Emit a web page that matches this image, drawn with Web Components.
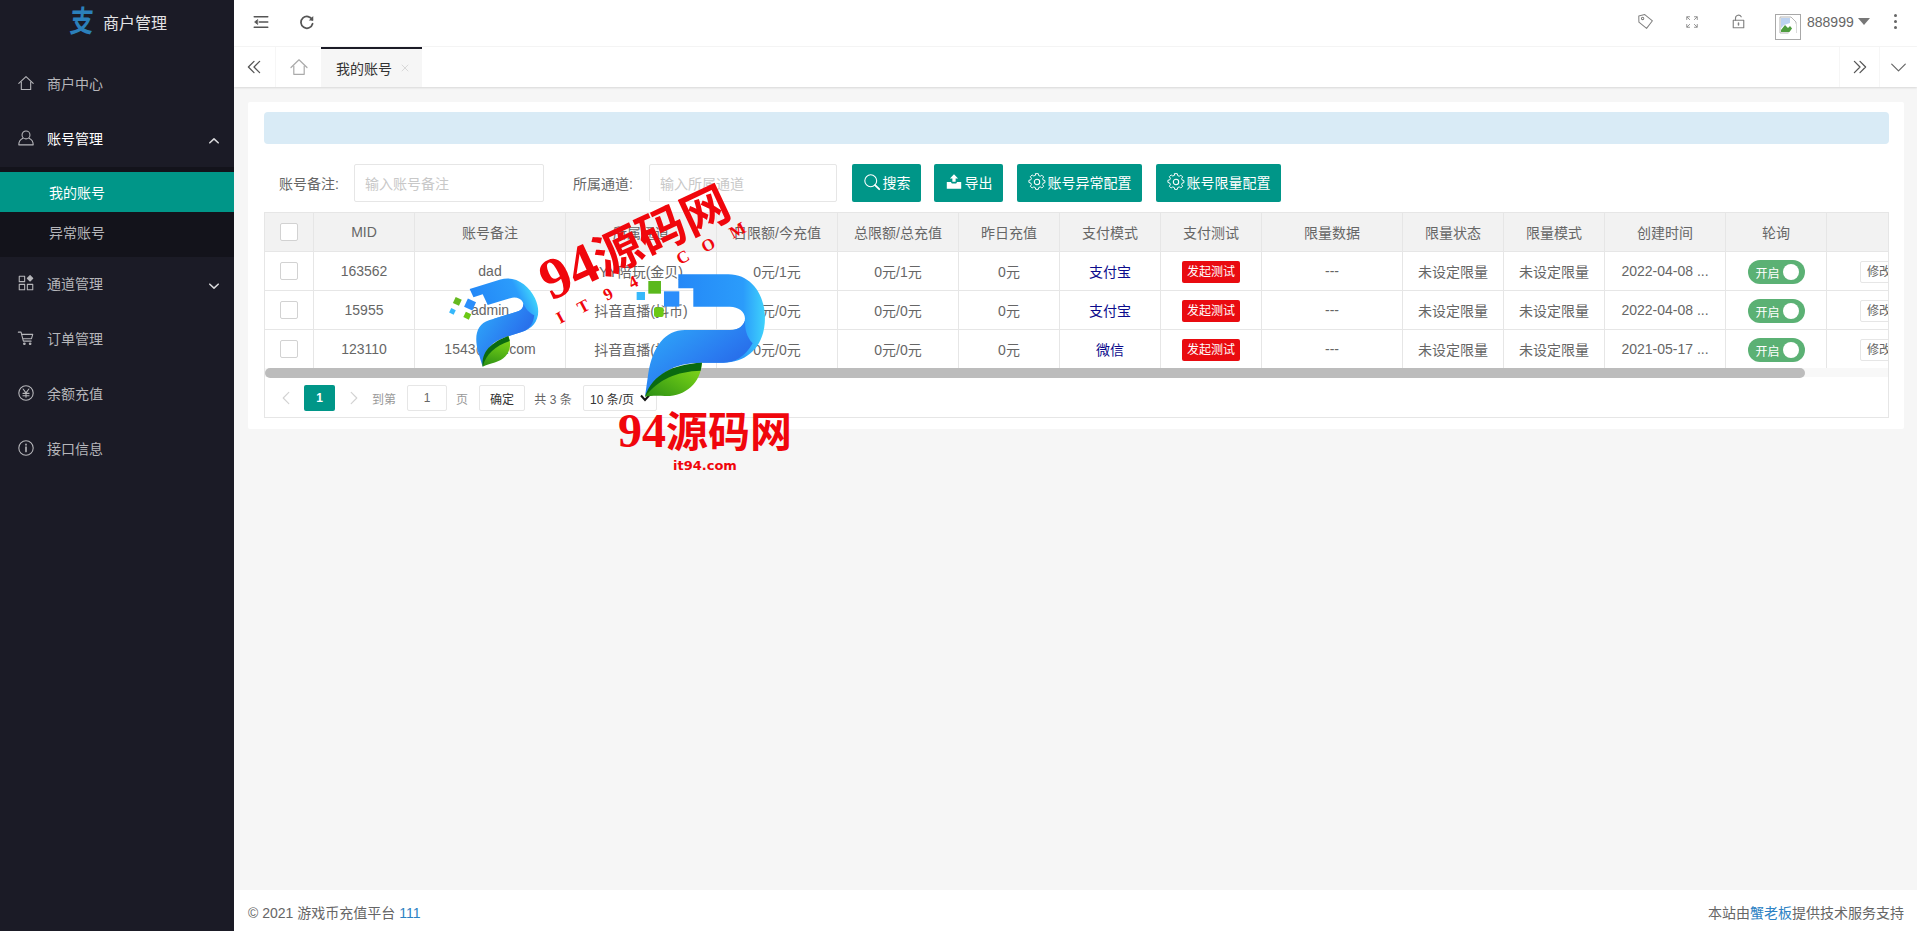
<!DOCTYPE html>
<html lang="zh">
<head>
<meta charset="utf-8">
<title>我的账号</title>
<style>
html,body{margin:0;padding:0;height:100%;overflow:hidden;background:#f6f6f6;}
body{font:14px "Liberation Sans","Noto Sans CJK SC",sans-serif;color:#666;}
</style>
</head>
<body>
<admin-app></admin-app>
<script>
const ic = (body, size = 16, vb = 20, extra = '') =>
  `<svg width="${size}" height="${size}" viewBox="0 0 ${vb} ${vb}" fill="none" stroke="currentColor" stroke-width="1.2" stroke-linecap="round" stroke-linejoin="round" style="flex:none" ${extra}>${body}</svg>`;
const ICONS = {
  home: '<path d="M2 10.5 10 2.8l8 7.7"/><path d="M4.8 9v8.3h10.4V9"/>',
  user: '<circle cx="10" cy="6.6" r="4.4"/><path d="M6.6 10.2C3.8 11.4 2 14 2 17.6h16c0-3.6-1.8-6.2-4.6-7.4"/>',
  apps: '<rect x="2.5" y="2.5" width="6" height="6"/><rect x="2.5" y="11.5" width="6" height="6"/><rect x="11.5" y="11.5" width="6" height="6"/><path d="M14.5 1.8l3 3-3 3-3-3z" fill="currentColor"/>',
  cart: '<path d="M1.5 3.5h3l2.6 10h8.6"/><path d="M5.2 6h12.3l-1.4 4.8H7"/><circle cx="8.2" cy="16.4" r=".9" fill="currentColor"/><circle cx="14.6" cy="16.4" r=".9" fill="currentColor"/>',
  yen: '<circle cx="10" cy="10" r="8"/><path d="M6.8 5.6 10 9.8l3.2-4.2M6.6 10.4h6.8M6.6 13h6.8M10 9.8v5"/>',
  info: '<circle cx="10" cy="10" r="8"/><path d="M10 9v5M10 5.8v.8" stroke-width="1.8"/>',
  up: '<path d="M3 13 10 6.5 17 13" stroke-width="2.6"/>',
  down: '<path d="M3 7l7 6.5L17 7" stroke-width="2.6"/>',
  indent: '<path d="M1.5 3.5h17M8 10h10.5M1.5 16.5h17" stroke-width="1.8"/><path d="M5.5 7.2 2 10l3.5 2.8z" fill="currentColor" stroke-width="1"/>',
  refresh: '<path d="M16.6 7.4A7.4 7.4 0 1 0 17 12.2" stroke-width="2.2"/><path d="M17.8 2.4v5.6h-5.6z" fill="currentColor" stroke="none"/>',
  tag: '<path d="M2.8 2.8 10 1.8l8.2 8.2-7.8 8.2-8.2-8.2z" transform="rotate(-6 10 10)"/><circle cx="6.6" cy="6.4" r="1.4"/>',
  full: '<path d="M2.5 6.5v-4h4M13.5 2.5h4v4M17.5 13.5v4h-4M6.5 17.5h-4v-4M3 3l3.6 3.6M17 3l-3.6 3.6M17 17l-3.6-3.6M3 17l3.6-3.6"/>',
  lock: '<rect x="3" y="8.4" width="14" height="10" stroke-width="1.5"/><path d="M6 8.4V5.4a4 4 0 0 1 7.6-1.6" stroke-width="1.5"/><path d="M10 12v2.6" stroke-width="2"/>',
  dbleft: '<path d="M10 3 3 10l7 7M17 3l-7 7 7 7" stroke-width="1.6"/>',
  dbright: '<path d="M3 3l7 7-7 7M10 3l7 7-7 7" stroke-width="1.6"/>',
  chev: '<path d="M2 6l8 8 8-8" stroke-width="1.4"/>',
  search: '<circle cx="8.6" cy="8.6" r="6.6"/><path d="M13.4 13.4 18 18" stroke-width="2"/>',
  gear: '<path d="M8.4 1.8h3.2l.5 2.4 1.9.8 2-1.3 2.2 2.2-1.3 2 .8 1.9 2.1.5v2.6l-2.1.5-.8 1.9 1.3 2-2.2 2.2-2-1.3-1.9.8-.5 2.2H8.4l-.5-2.2-1.9-.8-2 1.3-2.2-2.2 1.3-2-.8-1.9L0 12.6V10l2.3-.5.8-1.9-1.3-2L4 3.4l2 1.3 1.9-.8z" transform="translate(1 -.9) scale(.9)"/><circle cx="10" cy="10" r="3"/>',
  exp: '<path d="M10 1.5 14.5 6h-2.7v3.6H8.2V6H5.5z" fill="currentColor" stroke="none"/><path d="M2 10h4.6l1 1.8h4.8l1-1.8H18v7.5H2z" fill="currentColor" stroke="none"/>'
};

const define = (name, css, html, setup) => {
  customElements.define(name, class extends HTMLElement {
    constructor() {
      super();
      const root = this.attachShadow({mode: 'open'});
      root.innerHTML = `<style>${css}</style>${typeof html === 'function' ? html(this) : html}`;
      if (setup) setup(root, this);
    }
  });
};

define('nav-item', `
  :host{display:flex;align-items:center;height:55px;color:#b6b6ba;padding:0 0 3px 19px;box-sizing:border-box;position:relative;font-size:14px;flex:none;}
  :host([open]){color:#fff;}
  .i{width:14px;height:18px;display:flex;align-items:center;justify-content:center;margin-right:14px;color:#b6b6ba;}
  .i svg{display:block;}
  .c{position:absolute;left:208px;top:50%;margin-top:-6px;width:12px;height:12px;color:#d8d8da;}
`, h => `<span class="i">${ic(ICONS[h.getAttribute('icon')], 18)}</span><slot></slot>${h.hasAttribute('caret') ? `<span class="c">${ic(ICONS[h.getAttribute('caret')], 12)}</span>` : ''}`);

define('nav-sub', `
  :host{display:flex;align-items:center;height:40px;padding-left:49px;color:#b6b6ba;font-size:14px;padding-bottom:1px;box-sizing:border-box;}
  :host([active]){background:#009688;color:#fff;}
`, '<slot></slot>');

define('side-nav', `
  :host{display:flex;flex-direction:column;width:234px;flex:none;background:#1b1b26;height:931px;}
  .logo{height:50px;margin-bottom:7px;display:flex;align-items:center;padding-left:70px;color:#e4e4e6;font-size:16px;padding-bottom:6px;box-sizing:border-box;}
  .glyph{width:33px;font-size:30px;font-weight:700;color:#2b80bb;transform:scaleX(.78) skewX(-6deg);transform-origin:0 50%;line-height:30px;flex:none;}
  .sub{background:#13131b;padding:5px 0;}
`, `
  <div class="logo"><span class="glyph">支</span><span>商户管理</span></div>
  <nav-item icon="home">商户中心</nav-item>
  <nav-item icon="user" caret="up" open>账号管理</nav-item>
  <div class="sub"><nav-sub active>我的账号</nav-sub><nav-sub>异常账号</nav-sub></div>
  <nav-item icon="apps" caret="down">通道管理</nav-item>
  <nav-item icon="cart">订单管理</nav-item>
  <nav-item icon="yen">余额充值</nav-item>
  <nav-item icon="info">接口信息</nav-item>
`);

define('top-bar', `
  :host{display:flex;align-items:center;height:47px;background:#fff;box-sizing:border-box;border-bottom:1px solid #f6f6f6;color:#666;font-size:14px;padding-bottom:3px;}
  .b{display:flex;flex:none;}
  .l1{margin-left:19px;color:#555;}
  .l2{margin-left:30px;color:#555;}
  .sp{flex:1;}
  .g{color:#808080;}
  .avatar{width:26px;height:26px;box-sizing:border-box;border:1px solid #a8a8a8;margin-left:29px;margin-top:11px;display:flex;align-items:flex-start;justify-content:center;padding-top:1px;flex:none;}
  .name{margin-left:6px;width:48px;}
  .caret{width:0;height:0;border:6px solid transparent;border-top:7px solid #777;border-bottom:0;margin-left:3px;}
  .dots{display:flex;flex-direction:column;gap:3px;margin-left:24px;margin-right:20px;}
  .dots i{width:3px;height:3px;background:#666;border-radius:50%;display:block;}
`, `
  <span class="b l1">${ic(ICONS.indent, 16)}</span>
  <span class="b l2">${ic(ICONS.refresh, 16)}</span>
  <span class="sp"></span>
  <span class="b g">${ic(ICONS.tag, 17)}</span>
  <span class="b g" style="margin-left:31px">${ic(ICONS.full, 14)}</span>
  <span class="b g" style="margin-left:32px">${ic(ICONS.lock, 15)}</span>
  <span class="avatar"><svg width="18" height="18" viewBox="0 0 18 18"><path d="M1 1h11l5 5v11H1z" fill="#fff" stroke="#b5b5b5"/><path d="M2 14l4-5 3 3 2-2 5 6H2z" fill="#4f9d3f"/><path d="M2 2h9v5L5 9 2 12z" fill="#bcd2f0"/><path d="M9 18 17 7v11z" fill="#fff"/></svg></span>
  <span class="name">888999</span>
  <span class="caret"></span>
  <span class="dots"><i></i><i></i><i></i></span>
`);

define('tab-bar', `
  :host{display:flex;align-items:stretch;height:40px;background:#fff;box-shadow:0 1px 2px rgba(0,0,0,.12);position:relative;color:#666;}
  .cell{display:flex;align-items:center;justify-content:center;flex:none;box-sizing:border-box;}
  .a{width:42px;border-right:1px solid #f6f6f6;color:#555;padding-right:2px;}
  .h{width:45px;color:#aaa;}
  .tab{width:101px;background:#f6f6f6;border-top:2px solid #1b1b26;color:#333;justify-content:flex-start;padding-left:15px;position:relative;font-size:14px;}
  .x{position:absolute;left:79px;top:11px;width:10px;height:10px;color:#c4c4c4;}
  .sp{flex:1;}
  .r{width:40px;border-left:1px solid #f6f6f6;color:#555;}
  .v{width:38px;border-left:1px solid #f6f6f6;color:#666;}
`, `
  <span class="cell a">${ic(ICONS.dbleft, 16)}</span>
  <span class="cell h">${ic(ICONS.home, 20)}</span>
  <span class="cell tab">我的账号<span class="x">${ic('<path d="M4 4l12 12M16 4 4 16"/>', 10)}</span></span>
  <span class="sp"></span>
  <span class="cell r">${ic(ICONS.dbright, 16)}</span>
  <span class="cell v">${ic(ICONS.chev, 17)}</span>
`);

define('action-btn', `
  :host{display:flex;align-items:center;justify-content:center;height:38px;background:#009688;color:#fff;border-radius:2px;font-size:14px;box-sizing:border-box;flex:none;gap:2px;padding-bottom:2px;}
  svg{display:block;}
`, h => `${ic(ICONS[h.getAttribute('icon')], 18)}<slot></slot>`);

define('search-form', `
  :host{display:flex;align-items:center;height:38px;margin-bottom:10px;color:#666;}
  .lab{padding-left:15px;box-sizing:border-box;flex:none;}
  .inp{height:38px;box-sizing:border-box;border:1px solid #e6e6e6;border-radius:2px;color:#c8c8c8;display:flex;align-items:center;padding-left:10px;flex:none;background:#fff;}
`, `
  <span class="lab" style="width:90px">账号备注:</span>
  <span class="inp" style="width:190px">输入账号备注</span>
  <span class="lab" style="width:105px;padding-left:29px">所属通道:</span>
  <span class="inp" style="width:188px">输入所属通道</span>
  <action-btn icon="search" style="width:69px;margin-left:15px">搜索</action-btn>
  <action-btn icon="exp" style="width:69px;margin-left:13px">导出</action-btn>
  <action-btn icon="gear" style="width:125px;margin-left:14px">账号异常配置</action-btn>
  <action-btn icon="gear" style="width:125px;margin-left:14px">账号限量配置</action-btn>
`);

define('toggle-switch', `
  :host{display:inline-flex;align-items:center;width:57px;height:24px;margin-top:2px;border-radius:12px;background:#5bb174;color:#fff;font-size:12px;box-sizing:border-box;padding-left:8px;position:relative;vertical-align:middle;}
  i{position:absolute;right:6px;top:4px;width:16px;height:16px;border-radius:50%;background:#fff;}
`, '<slot></slot><i></i>');

const COLS = [49,101,151,151,121,121,101,101,101,141,101,101,121,101,151];
const HEADS = ['', 'MID','账号备注','所属通道','日限额/今充值','总限额/总充值','昨日充值','支付模式','支付测试','限量数据','限量状态','限量模式','创建时间','轮询',''];
const ROWS = [
  ['163562','dad','YY陪玩(金贝)','0元/1元','0元/1元','0元','支付宝','2022-04-08 ...'],
  ['15955','admin','抖音直播(抖币)','0元/0元','0元/0元','0元','支付宝','2022-04-08 ...'],
  ['123110','1543@qq.com','抖音直播(抖币)','0元/0元','0元/0元','0元','微信','2021-05-17 ...']
];

define('data-table', `
  :host{display:block;border:1px solid #e6e6e6;box-sizing:border-box;overflow:hidden;background:#fff;}
  table{border-collapse:separate;border-spacing:0;table-layout:fixed;width:1713px;font-size:14px;color:#666;}
  th,td{padding:0;text-align:center;font-weight:400;border-right:1px solid #e6e6e6;border-bottom:1px solid #e6e6e6;white-space:nowrap;overflow:hidden;box-sizing:border-box;height:39px;}
  th{background:#f2f2f2;}
  th:last-child,td:last-child{border-right:0;}
  .cb{display:inline-block;width:18px;height:18px;box-sizing:border-box;border:1px solid #d2d2d2;border-radius:2px;background:#fff;vertical-align:middle;}
  .pay{color:#0b0b8c;}
  .test{display:inline-block;width:58px;height:22px;line-height:22px;margin-top:2px;vertical-align:middle;background:#e90b10;color:#fff;font-size:12px;border-radius:2px;}
  .edit{text-align:left;padding-left:33px;}
  .mini{display:inline-block;height:22px;line-height:20px;margin-top:2px;vertical-align:middle;box-sizing:border-box;border:1px solid #e6e6e6;border-radius:2px;padding:0 6px;font-size:12px;color:#666;background:#fff;}
  .track{height:9px;background:#f8f8f8;position:relative;}
  .thumb{height:10px;width:1540px;background:#bcbcbc;border-radius:5px;margin-top:-1px;position:relative;}
`, `
  <table><colgroup>${COLS.map(w => `<col style="width:${w}px">`).join('')}</colgroup>
  <thead><tr>${HEADS.map((h, i) => `<th>${i === 0 ? '<span class="cb"></span>' : h}</th>`).join('')}</tr></thead>
  <tbody>${ROWS.map(r => `<tr>
    <td><span class="cb"></span></td><td>${r[0]}</td><td>${r[1]}</td><td>${r[2]}</td><td>${r[3]}</td><td>${r[4]}</td><td>${r[5]}</td>
    <td class="pay">${r[6]}</td><td><span class="test">发起测试</span></td><td>---</td><td>未设定限量</td><td>未设定限量</td><td>${r[7]}</td>
    <td><toggle-switch>开启</toggle-switch></td><td class="edit"><span class="mini">修改</span></td></tr>`).join('')}</tbody></table>
  <div class="track"><div class="thumb"></div></div>
  <pager-bar></pager-bar>
`);

define('pager-bar', `
  :host{display:flex;align-items:center;height:40px;box-sizing:border-box;padding:8px 0 6px;font-size:12px;color:#666;background:#fff;}
  span{flex:none;display:flex;align-items:center;justify-content:center;box-sizing:border-box;}
  .ar{width:12px;color:#d2d2d2;}
  .cur{width:31px;height:26px;background:#009688;color:#fff;border-radius:2px;font-weight:700;margin-left:12px;}
  .t{color:#999;}
  .box{height:26px;border:1px solid #e6e6e6;border-radius:2px;color:#333;background:#fff;}
`, `
  <span class="ar" style="margin-left:15px">${ic('<path d="M14 2 6 10l8 8" stroke-width="1.6"/>', 14)}</span>
  <span class="cur">1</span>
  <span class="ar" style="margin-left:13px">${ic('<path d="M6 2l8 8-8 8" stroke-width="1.6"/>', 14)}</span>
  <span class="t" style="margin-left:12px;width:24px">到第</span>
  <span class="box" style="margin-left:11px;width:40px;color:#666">1</span>
  <span class="t" style="margin-left:9px;width:12px">页</span>
  <span class="box" style="margin-left:11px;width:46px">确定</span>
  <span style="margin-left:9px;width:38px">共 3 条</span>
  <span class="box" style="margin-left:11px;width:74px;justify-content:flex-start;padding-left:6px;gap:6px">10 条/页<svg width="10" height="8" viewBox="0 0 10 8" fill="none" stroke="#111" stroke-width="2"><path d="M1 1.5 5 6l4-4.5"/></svg></span>
`);

define('info-card', `
  :host{display:block;background:#fff;border-radius:2px;padding:10px 15px 10px 16px;height:327px;box-sizing:border-box;}
  .alert{height:32px;background:#d9ebf6;border-radius:4px;margin-bottom:20px;}
`, `<div class="alert"></div><search-form></search-form><data-table></data-table>`);

define('page-footer', `
  :host{display:flex;align-items:center;justify-content:space-between;height:41px;background:#fff;padding:3px 13px 0 14px;font-size:14px;color:#666;flex:none;box-sizing:border-box;}
  a{color:#2d82c4;text-decoration:none;}
`, `<span>© 2021 游戏币充值平台 <a>111</a></span><span>本站由<a>蟹老板</a>提供技术服务支持</span>`);

define('wm-overlay', `
  :host{position:absolute;left:0;top:0;width:1917px;height:931px;pointer-events:none;}
  svg{display:block;}
  .big{font-family:"Noto Sans CJK SC",sans-serif;font-weight:700;fill:#f0060c;}
  .num{font-family:"Liberation Serif",serif;font-weight:700;}
`, `
<svg width="1917" height="931" viewBox="0 0 1917 931">
  <defs>
    <linearGradient id="g1" x1="0" y1="0" x2="1" y2="0"><stop offset="0" stop-color="#2488f7"/><stop offset=".75" stop-color="#2b9cfb"/><stop offset="1" stop-color="#3fd2fb"/></linearGradient>
    <linearGradient id="g2" x1="0" y1="0" x2="1" y2="1"><stop offset="0" stop-color="#2fb0fb"/><stop offset=".55" stop-color="#2a7bf0"/><stop offset="1" stop-color="#2453dc"/></linearGradient>
    <linearGradient id="g3" x1="0" y1="1" x2="1" y2="0"><stop offset="0" stop-color="#2a8e14"/><stop offset=".6" stop-color="#62c016"/><stop offset="1" stop-color="#8ad81a"/></linearGradient>
    <g id="pmark">
      <path fill="url(#g1)" d="M745 313H895C965 313 1005 375 1005 445C1005 525 955 578 880 578H770L790 480H900C930 480 945 465 945 445C945 425 925 410 900 410H790V355H745Z"/>
      <path fill="url(#g2)" d="M945 452C935 474 920 480 900 480H765C705 480 668 530 655 610L645 680C680 610 730 578 815 578H880C915 578 945 560 968 520C950 500 945 480 945 452Z"/>
      <path fill="url(#g3)" d="M645 680C670 625 725 590 816 578C812 640 765 680 705 678C682 677 662 677 645 680Z"/>
      <path fill="#0a6a10" d="M645 680C668 612 730 582 816 578L812 602C740 604 685 628 645 680Z"/>
    </g>
  </defs>
  <g transform="translate(430 170) scale(.3333)">
    <use href="#pmark" transform="matrix(.615 -.189 .274 .583 -425 315.5)"/>
    <rect x="72" y="384" width="20" height="20" fill="#66b91f" transform="rotate(25 82 394)"/>
    <rect x="107" y="390" width="27" height="27" fill="#2b8efb" transform="rotate(25 120 403)"/>
    <rect x="60" y="417" width="15" height="15" fill="#36b8fb" transform="rotate(25 68 424)"/>
    <rect x="103" y="428" width="18" height="18" fill="#6bc814" transform="rotate(25 112 437)"/>
    <use href="#pmark"/>
    <rect x="655" y="333" width="38" height="38" fill="#5ab81c"/>
    <rect x="620" y="366" width="25" height="24" fill="#36b8fb"/>
    <rect x="702" y="364" width="46" height="46" fill="#2b8efb"/>
    <rect x="672" y="412" width="29" height="29" rx="6" fill="#6bc814"/>
  </g>
  <text class="big" transform="translate(551 301) rotate(-25)" font-size="48"><tspan class="num" font-size="58">94</tspan>源码网</text>
  <text class="big" x="618" y="447" font-size="42" font-weight="900"><tspan class="num" font-size="48">94</tspan>源码网</text>
  <text font-family="Liberation Serif" font-weight="700" font-size="17" fill="#f0060c" rotate="-28" x="560 581 607 632 680 705 733" y="324 314 301 289 265 253 239">IT94COM</text>
  <text font-family="DejaVu Sans" font-weight="700" font-size="13" fill="#f0060c" x="673" y="470">it94.com</text>
</svg>`);

define('admin-app', `
  :host{display:flex;width:1917px;height:931px;position:relative;overflow:hidden;}
  .main{flex:1;display:flex;flex-direction:column;min-width:0;}
  .content{flex:1;padding:15px 13px 0 14px;background:#f6f6f6;}
`, `
  <side-nav></side-nav>
  <div class="main">
    <top-bar></top-bar>
    <tab-bar></tab-bar>
    <div class="content"><info-card></info-card></div>
    <page-footer></page-footer>
  </div>
  <wm-overlay></wm-overlay>
`);
</script>
</body>
</html>
